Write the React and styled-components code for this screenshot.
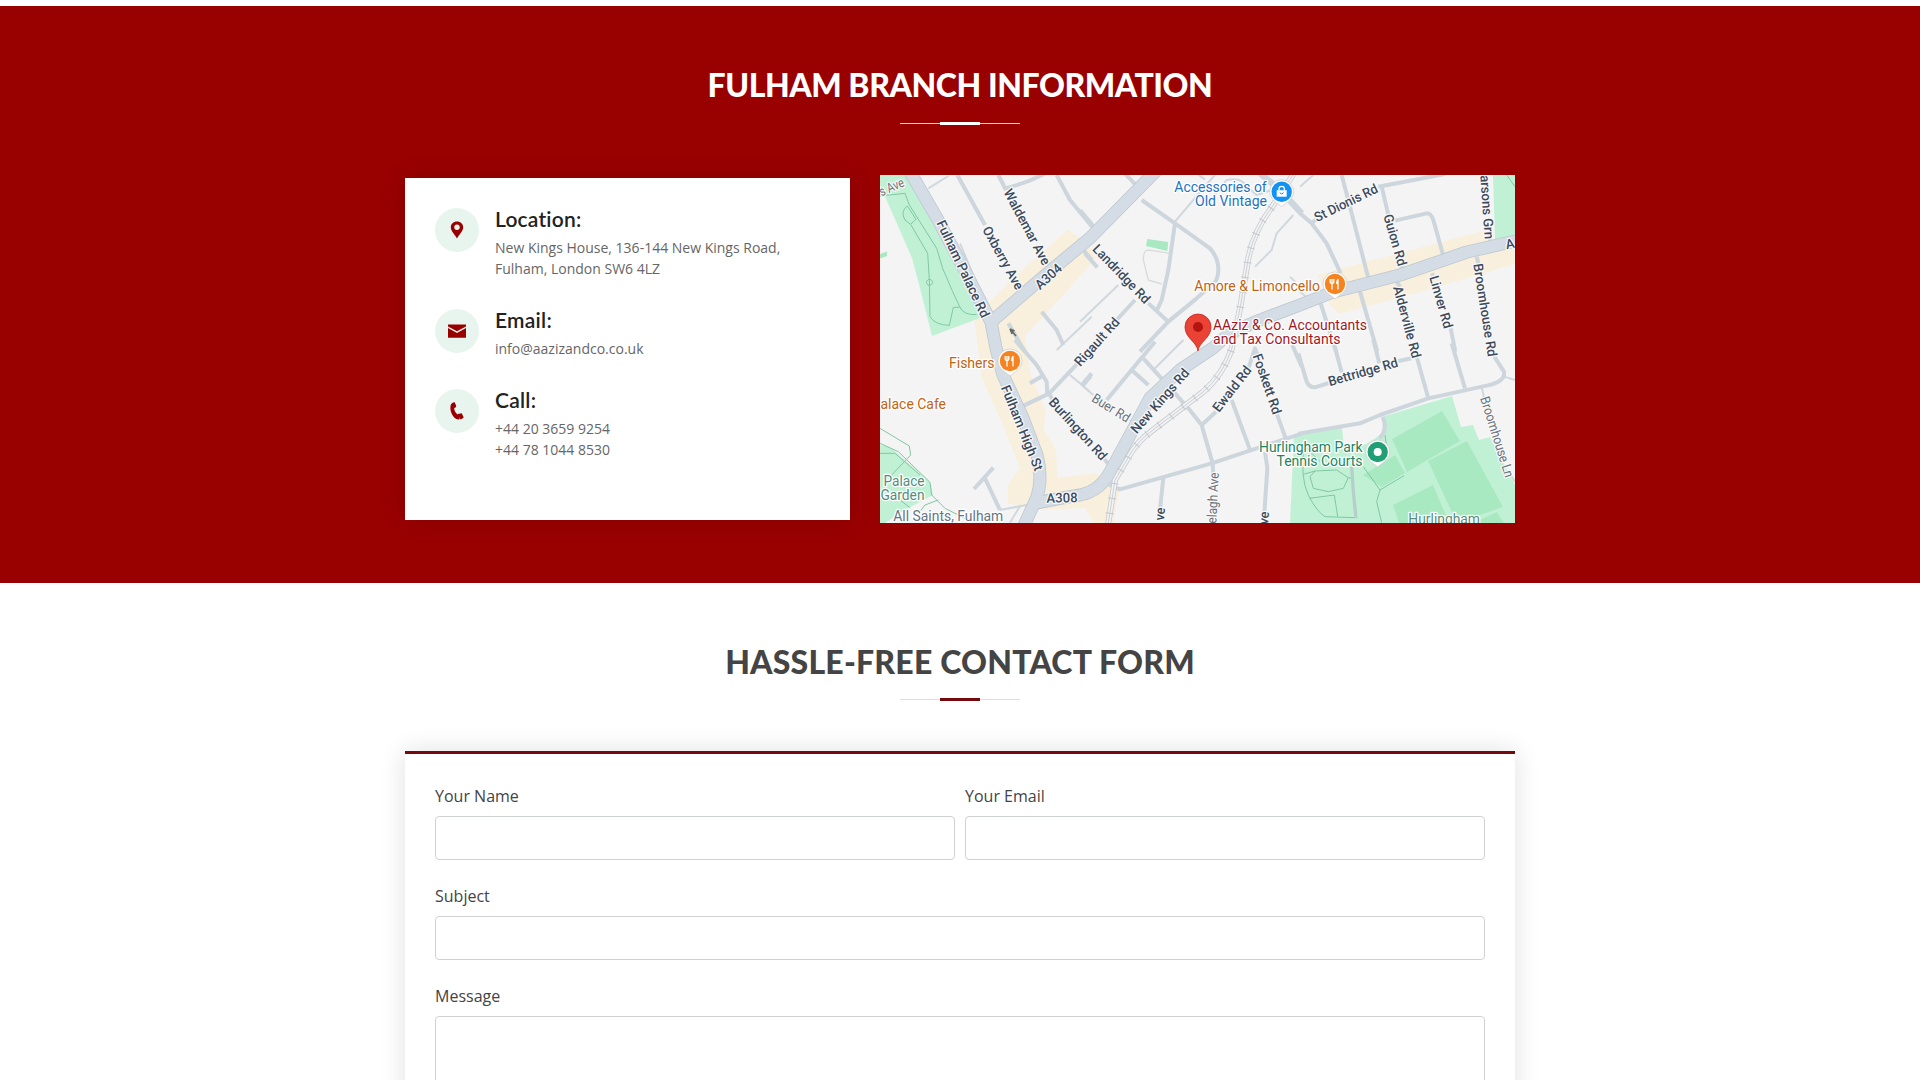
import React from "react";
import styled, { createGlobalStyle } from "styled-components";

const GlobalStyle = createGlobalStyle`
  *, *::before, *::after { box-sizing: border-box; }
  html, body { margin: 0; padding: 0; height: 1080px; overflow: hidden; }
  body {
    background: #fff;
    color: #444;
    font-family: "Open Sans", "Noto Sans", sans-serif;
    font-size: 16px;
    line-height: 24px;
  }
`;

const Page = styled.main`
  height: 1080px;
  padding-top: 6px;
  overflow: hidden;
`;

const Section = styled.section`
  padding: 60px 0;
  background: ${(p) => (p.$dark ? "#990000" : "#fff")};
`;

const Container = styled.div`
  width: 1110px;
  margin: 0 auto;
`;

const SectionTitle = styled.header`
  height: ${(p) => (p.$light ? "109px" : "108px")};
  display: flex;
  flex-direction: column;
  align-items: center;
`;

const Title = styled.h2`
  margin: 0 0 ${(p) => (p.$light ? "18px" : "17px")};
  height: 38px;
  font: 900 32px/38px Lato, sans-serif;
  letter-spacing: ${(p) => p.$spacing};
  white-space: nowrap;
  color: ${(p) => (p.$light ? "#fff" : "#444")};
`;

const Divider = styled.div`
  width: 120px;
  height: 3px;
  display: flex;
  align-items: center;
  &::before,
  &::after {
    content: "";
    flex: 1;
    height: 1px;
    background: ${(p) => (p.$light ? "#eed5d5" : "#ddd")};
  }
`;

const DividerAccent = styled.span`
  width: 40px;
  height: 3px;
  background: ${(p) => (p.$light ? "#fff" : "#76090d")};
`;

const BranchRow = styled.div`
  display: grid;
  grid-template-columns: 445px 635px;
  gap: 30px;
  align-items: center;
`;

const InfoCard = styled.div`
  height: 342px;
  padding: 30px;
  display: flex;
  flex-direction: column;
  gap: 30px;
  background: #fff;
  box-shadow: 0 0 24px rgba(0, 0, 0, 0.12);
`;

const InfoItem = styled.div`
  display: grid;
  grid-template-columns: 44px 1fr;
  column-gap: 16px;
`;

const IconCircle = styled.div`
  width: 44px;
  height: 44px;
  border-radius: 50%;
  background: #e8f5ee;
  display: flex;
  align-items: center;
  justify-content: center;
`;

const InfoHeading = styled.h4`
  margin: 0 0 8px;
  font: 600 21px/21px Lato, sans-serif;
  letter-spacing: ${(p) => p.$spacing || "0"};
  color: #222;
`;

const InfoText = styled.p`
  margin: 0;
  font-size: 14px;
  line-height: 21px;
  color: #666;
`;

const MapView = styled.svg`
  display: block;
  width: 635px;
  height: 348px;
  background: #f4f4f4;
  font-family: Roboto, sans-serif;
`;

const FormCard = styled.form`
  height: 480px;
  padding: 30px;
  border-top: 3px solid #76090d;
  background: #fff;
  box-shadow: 0 0 24px rgba(0, 0, 0, 0.12);
  display: flex;
  flex-direction: column;
  gap: 24px;
`;

const FieldRow = styled.div`
  display: grid;
  grid-template-columns: 1fr 1fr;
  gap: 10px;
`;

const Field = styled.label`
  display: flex;
  flex-direction: column;
  gap: 8px;
`;

const Input = styled.input`
  width: 100%;
  height: 44px;
  border: 1px solid #cfd1d4;
  border-radius: 4px;
  background: #fff;
  outline: none;
`;

const TextArea = styled.textarea`
  width: 100%;
  height: 240px;
  border: 1px solid #cfd1d4;
  border-radius: 4px;
  background: #fff;
  resize: none;
  outline: none;
`;

const PinIcon = () => (
  <svg width="14" height="18" viewBox="0 0 14 18" fill="#990000">
    <path fillRule="evenodd" d="M7 .4C3.4.4.8 3 .8 6.3.8 10.200 4.800 13.500 7 17.600 9.200 13.500 13.200 10.200 13.200 6.300 13.200 3 10.600.4 7 .4ZM7 3.500a2.700 2.700 0 1 1 0 5.400 2.700 2.700 0 0 1 0-5.400Z" />
  </svg>
);

const MailIcon = () => (
  <svg width="18" height="14" viewBox="0 0 18 14" fill="#990000">
    <path d="M0 .400H18V2.600L9 7.200 0 2.600Z" />
    <path d="M0 4 9 8.900 18 4V13.800H0Z" />
  </svg>
);

const PhoneIcon = () => (
  <svg width="14" height="18" viewBox="0 0 14 18" fill="#990000">
    <path d="M3.200.6 4.700.3 6.300 3.900 5.600 5.500 4.200 6C4.200 8.700 5.500 11 7.800 12.600L8.900 11.600 10.200 12 9 17.500C7.300 17.800 5.200 16.800 3.600 14.800 1 11.600-.2 7.200.6 3.700.9 2.200 1.800 1.100 3.200.6Z" />
    <path d="M10.300 11.500 11.700 11.200 13.700 15.300 12.600 16.400 9.800 17.500 8.600 13Z" />
  </svg>
);

const contacts = [
  { title: "Location:", spacing: "0.2px", icon: <PinIcon />, lines: ["New Kings House, 136-144 New Kings Road,", "Fulham, London SW6 4LZ"] },
  { title: "Email:", spacing: "0.25px", icon: <MailIcon />, lines: ["info@aazizandco.co.uk"] },
  { title: "Call:", spacing: "0.25px", icon: <PhoneIcon />, lines: ["+44 20 3659 9254", "+44 78 1044 8530"] },
];

/* Street geometry is drawn in six tiles at three units per pixel. */
const tiles = [
  {
    x: 870, y: 170,
    roads: ["M262 15 345 165", "M385 15 408 60", "M405 55Q470 40 530 8", "M560 15 600 90 670 175", "M450 350 470 368", "M415 460 465 545", "M515 425 560 480 580 525", "M640 240 665 270"],
    thin: ["M175 55 235 18", "M560 540 665 440", "M270 220 345 400"],
    paths: ["M30 78 105 70 118 105 200 235 218 295 248 365 268 408Q278 436 320 434", "M112 108Q90 125 105 150L122 163 138 148 112 108M122 163 173 250 178 330 180 440Q195 465 238 466L250 412H268", "M178 328a9 9 0 1 0 1 0"],
  },
  {
    x: 1080, y: 170,
    roads: ["M130 5 172 50", "M0 120 42 170", "M185 90 285 160 390 235Q416 265 415 300T395 345L350 385 265 455 180 545", "M285 160 265 300 245 390 232 418", "M205 400 268 458", "M165 390 110 450", "M15 250 52 292"],
    thin: ["M285 155 378 45 405 15", "M355 15 375 28", "M115 345 0 455", "M400 80 440 30Q485 20 500 50L530 75 575 60", "M640 135 590 190 575 240 525 290", "M630 320 645 335"],
    wide: ["M540 10 600 60 665 130"],
    faint: ["M270 250 205 240Q190 240 190 270L205 330 245 342"],
  },
  {
    x: 1300, y: 170,
    roads: ["M0 130 35 160 80 220 122 310", "M35 160 58 140", "M125 15 150 110 205 325", "M235 50 435 12", "M245 50 265 135", "M285 152 380 130Q393 130 400 150L432 265", "M180 365 232 545", "M62 400 108 545", "M303 285 312 310", "M290 335 300 350", "M396 310 402 325", "M452 475 466 545", "M530 260 536 285", "M570 205 572 230"],
    thin: ["M0 365 20 382", "M0 50 40 15"],
    paths: ["M620 15 645 50"],
  },
  {
    x: 870, y: 345,
    roads: ["M435 -15 500 60 530 110 532 148 455 185", "M480 115 522 90", "M535 148 628 50", "M535 140 550 170", "M370 368 312 432", "M345 400 390 495"],
    thin: ["M390 495 470 480", "M600 90 660 140", "M640 125 665 95", "M452 480 420 533"],
    paths: ["M30 250 118 303 122 330 65 390", "M30 295 85 320 180 412 185 450 225 490 285 520", "M30 325 75 325 150 390", "M90 465 120 488 M150 500 165 480 205 465"],
  },
  {
    x: 1080, y: 345,
    roads: ["M665 266 500 320 395 355 120 433 88 420", "M398 355 385 310 365 240 325 190 285 145 190 40", "M365 240 408 200", "M505 70 525 10 535 35", "M455 165 512 320", "M590 205 617 280", "M637 0 665 65", "M250 397 240 495", "M398 355 400 390", "M555 320 562 370 553 505", "M225 -10 80 165", "M155 75 205 120", "M35 85 5 120", "M72 340 88 362"],
    thin: ["M220 75 310 -15", "M5 120 40 150", "M150 225 175 245"],
  },
  {
    x: 1300, y: 345,
    roads: ["M-5 25 20 110Q28 128 45 127L90 113", "M103 0 125 82", "M220 -15 238 55", "M295 48 335 40", "M350 35 385 160", "M455 -5 495 130", "M583 35 612 80Q618 110 560 122L385 160 240 210 180 235 -5 266", "M248 215Q265 255 238 280"],
    thin: ["M545 125 552 158", "M612 95 645 105", "M632 390 645 410"],
    grey: ["M155 365 160 440 168 520"],
    paths: ["M10 300 60 350M10 388 45 378 110 375 145 398 130 430 85 440 40 430 30 395 45 378M12 300Q0 400 25 450T75 515L165 518M28 460 103 450 113 515M145 398 155 400", "M190 365 240 435 312 392M240 435 230 470 245 533M255 270 260 305"],
  },
];

const roadLayers = [
  { key: "faint", color: "#d9dcdf", width: 4 },
  { key: "thin", color: "#d0d8df", width: 6 },
  { key: "roads", color: "#cdd6dd", width: 12 },
  { key: "wide", color: "#cdd6dd", width: 19 },
];

const majorRoads = [
  { d: "M909 170 938 220 964 269 991 322 996 348 1003 375 1023 418 1037 455Q1043 478 1037 497L1022 530", w: 12 },
  { d: "M991 322 1049 272 1090 238 1157 170", w: 12 },
  { d: "M1036 503 1062 498 1080 495Q1100 491 1110 472L1130 435 1150 398 1180 370 1213 348 1230 333 1260 320 1300 305 1333 292 1400 275 1467 252 1520 240", w: 12 },
];

const railway = "M1296 170 1272 207Q1253 232 1248 260L1241 303 1237 323 1232 348Q1223 375 1203 392L1153 430Q1136 442 1128 458L1115 480 1108 525";

const streets = [
  ["s Ave", 891.5, 187, -24, 26, 1],
  ["Fulham Palace Rd", 963, 269, 64.7, 106],
  ["Oxberry Ave", 1003, 258, 61, 70],
  ["Waldemar Ave", 1027, 227, 61.8, 84],
  ["A304", 1048.5, 276.5, -42, 31],
  ["Landridge Rd", 1121.5, 274, 46, 76],
  ["Rigault Rd", 1097, 342, -48, 60],
  ["New Kings Rd", 1160, 401, -49, 81],
  ["Buer Rd", 1111, 408, 32, 42, 1],
  ["Burlington Rd", 1078, 429, 47.6, 79],
  ["Fulham High St", 1022, 428, 68, 91],
  ["A308", 1062, 498, -1, 31],
  ["Ewald Rd", 1232, 389, -52, 54],
  ["Foskett Rd", 1267, 384, 71, 63],
  ["Bettridge Rd", 1363, 372, -16, 72],
  ["St Dionis Rd", 1346, 203, -26, 69],
  ["Guion Rd", 1395, 240, 74, 53],
  ["Alderville Rd", 1407, 322, 75, 74],
  ["Linver Rd", 1441, 302, 74, 54],
  ["Broomhouse Rd", 1485, 310, 81, 94],
  ["arsons Grn", 1487, 207, 86, 64],
  ["A", 1510, 244, -12, 9],
  ["Broomhouse Ln", 1497, 437, 72.5, 84, 1],
  ["elagh Ave", 1213, 498, -87, 51, 1],
  ["ve", 1160, 514, -85, 13],
  ["ve", 1264, 518, -85, 13],
];

const places = [
  ["Accessories of", 1174.3, 192, 92.400, "#2272c3"],
  ["Old Vintage", 1195, 206, 72, "#2272c3"],
  ["Amore & Limoncello", 1194.3, 291, 125.700, "#c06414"],
  ["AAziz & Co. Accountants", 1213, 330, 154, "#a3161f"],
  ["and Tax Consultants", 1213, 344, 127.500, "#a3161f"],
  ["Fishers", 949, 368, 45.500, "#c06414"],
  ["alace Cafe", 880.5, 409, 65.500, "#c06414"],
  ["Palace", 883.5, 486, 41, "#508d7e"],
  ["Garden", 880.5, 500, 44, "#508d7e"],
  ["All Saints, Fulham", 893.3, 521, 110, "#647585"],
  ["Hurlingham Park", 1259, 452, 103.500, "#218360"],
  ["Tennis Courts", 1276.5, 466, 86, "#218360"],
  ["Hurlingham", 1408.3, 524, 71.700, "#5a8c7d"],
];

const Fork = () => (
  <g stroke="#fff" strokeWidth="1.3" fill="none">
    <path d="M-4.800-5V-2Q-4.800-.5-3-.5T-1.200-2V-5M-3-5V5.500" />
    <path d="M3 5.500V-5" />
    <path d="M3-5Q.9-4 1 0H3Z" fill="#fff" stroke="none" />
  </g>
);

const Marker = ({ x, y, color, children }) => (
  <g transform={`translate(${x} ${y})`}>
    <path d="M0 15C-3 12-12 8-12 0A12 12 0 0 1 12 0C12 8 3 12 0 15Z" fill="#fff" stroke="#c8c8c8" strokeWidth=".7" />
    <circle r="10.200" fill={color} />
    {children}
  </g>
);

const BranchMap = () => (
  <MapView viewBox="880 175 635 348" role="img" aria-label="Fulham branch map">
    <g fill="#f8efdc">
      <path d="M974 317 1022 270 1068 230 1081 239 1090 248 1096 258 1065 293 1025 336 1030 372 1046 412 1043 428 1056 450 1057 478 1096 473 1119 492 1113 523H1094L1085 508 1035 510 1008 503V485L1020 468 1003 425 982 378Z" />
      <path d="M1318 275 1483 231 1493 239 1515 236V264L1420 292 1339 314 1329 303Z" />
    </g>
    <g fill="#c1f1d5">
      <path d="M880 175H907L988 315 932 336 920 288 912 258 880 185Z" />
      <path d="M1493 175H1515V238L1495 240Z" />
      <path d="M880 445 890 447 930 482 933 495 905 510 885 523H880Z" />
      <path d="M1294 434 1342 428 1344 448 1366 444 1382 434 1385 416 1452 396 1461 427 1473 425 1479 440 1490 437 1515 485V523H1290Z" />
    </g>
    <g fill="#a9e9c2">
      <path d="M1392 439 1442 411 1460 441 1407 472Z" />
      <path d="M1428 461 1467 441 1503 507 1457 523Z" />
      <path d="M1393 505 1433 485 1449 523H1399Z" />
      <path d="M1363 475 1395 455 1405 473 1382 487Z" />
      <path d="M1473 523 1497 512 1504 523Z" />
      <path d="M1147.300 239 1168.300 242 1167.300 251 1146 246Z" />
      <path d="M880 254 887 251.500V256L880 258.500Z" />
    </g>

    {tiles.map((t) => (
      <g key={`${t.x}-${t.y}`} transform={`translate(${t.x} ${t.y}) scale(.33333)`} fill="none" strokeLinejoin="round">
        {(t.paths || []).map((d) => <path key={d} d={d} stroke="#7fc7a5" strokeWidth="3" />)}
        {(t.grey || []).map((d) => <path key={d} d={d} stroke="#b7cfcb" strokeWidth="10" />)}
        {roadLayers.map((l) => (t[l.key] || []).map((d) => <path key={d} d={d} stroke={l.color} strokeWidth={l.width} />))}
      </g>
    ))}

    <g fill="none" strokeLinejoin="round">
      {majorRoads.map((r) => <path key={r.d} d={r.d} stroke="#bdc8d1" strokeWidth={r.w + 1} />)}
      {majorRoads.map((r) => <path key={r.d} d={r.d} stroke="#d4dde5" strokeWidth={r.w - 0.6} />)}
      <path d={railway} stroke="#c8cbd0" strokeWidth="6" />
      <path d={railway} stroke="#f1f2f3" strokeWidth="4.400" />
      <path d={railway} stroke="#cdd0d4" strokeWidth="1" />
      <path d={railway} stroke="#c4c8cd" strokeWidth="8" strokeDasharray="1 14" />
    </g>
    <path d="M1010 329 1016 336M1010 329 1012 334M1010 329 1014.500 331" stroke="#666" strokeWidth="1.500" />

    <g fontSize="13.400" fontWeight="500" textAnchor="middle" stroke="#f8f8f8" strokeWidth="2.500" paintOrder="stroke" strokeLinejoin="round">
      {streets.map(([name, x, y, angle, length, minor]) => (
        <text key={`${name}${x}`} transform={`translate(${x} ${y}) rotate(${angle})`} y="4.500" textLength={length} lengthAdjust="spacingAndGlyphs" fill={minor ? "#69727d" : "#3c4a5c"} fontWeight={minor ? 400 : 500}>
          {name}
        </text>
      ))}
    </g>
    <g fontSize="13.800" stroke="#fff" strokeWidth="2.500" paintOrder="stroke" strokeLinejoin="round">
      {places.map(([name, x, y, length, color]) => (
        <text key={name} x={x} y={y} textLength={length} lengthAdjust="spacingAndGlyphs" fill={color}>{name}</text>
      ))}
    </g>

    <Marker x={1281.7} y={191.7} color="#1193f5">
      <path d="M-5-1.500H5V5H-5Z" fill="#fff" />
      <path d="M-2.700-1.500V-3Q-2.700-5.300 0-5.300T2.700-3V-1.500" fill="none" stroke="#fff" strokeWidth="1.300" />
      <path d="M-2 1Q0 3.500 2 1" fill="none" stroke="#1193f5" />
    </Marker>
    <Marker x={1335} y={284} color="#f58320"><Fork /></Marker>
    <Marker x={1010} y={361} color="#f58320"><Fork /></Marker>
    <Marker x={1377.7} y={452} color="#1f9f73"><circle r="4" fill="#fff" /></Marker>
    <path d="M1198 351C1197 342 1185 338 1185 327A13 13 0 0 1 1211 327C1211 338 1199 342 1198 351Z" fill="#ea4335" stroke="#c5221f" strokeWidth=".8" />
    <circle cx="1198" cy="327" r="5" fill="#b31412" />
  </MapView>
);

const SectionHeading = ({ light, spacing, children }) => (
  <SectionTitle $light={light}>
    <Title $light={light} $spacing={spacing}>{children}</Title>
    <Divider $light={light}><DividerAccent $light={light} /></Divider>
  </SectionTitle>
);

export default function App() {
  return (
    <>
      <GlobalStyle />
      <Page>
        <Section $dark>
          <Container>
            <SectionHeading light spacing="-0.45px">FULHAM BRANCH INFORMATION</SectionHeading>
            <BranchRow>
              <InfoCard>
                {contacts.map((c) => (
                  <InfoItem key={c.title}>
                    <IconCircle>{c.icon}</IconCircle>
                    <div>
                      <InfoHeading $spacing={c.spacing}>{c.title}</InfoHeading>
                      {c.lines.map((line) => <InfoText key={line}>{line}</InfoText>)}
                    </div>
                  </InfoItem>
                ))}
              </InfoCard>
              <BranchMap />
            </BranchRow>
          </Container>
        </Section>
        <Section>
          <Container>
            <SectionHeading spacing="0.2px">HASSLE-FREE CONTACT FORM</SectionHeading>
            <FormCard>
              <FieldRow>
                <Field>Your Name<Input type="text" /></Field>
                <Field>Your Email<Input type="email" /></Field>
              </FieldRow>
              <Field>Subject<Input type="text" /></Field>
              <Field>Message<TextArea /></Field>
            </FormCard>
          </Container>
        </Section>
      </Page>
    </>
  );
}
